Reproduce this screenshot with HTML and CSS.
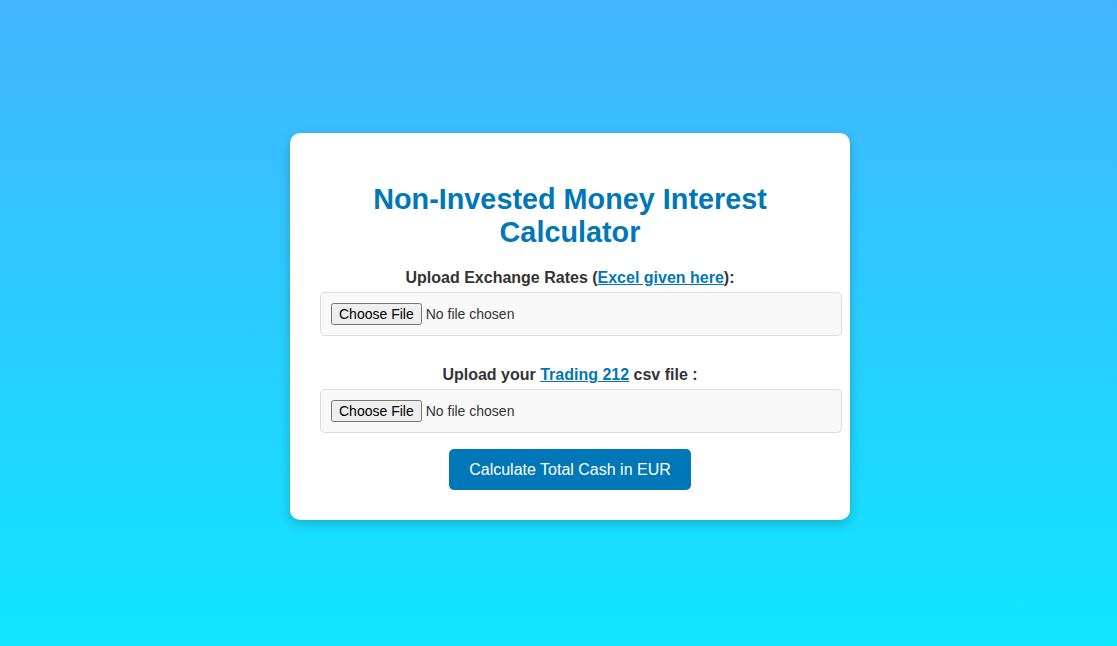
FILE: index.html
```html
<!DOCTYPE html>
<html lang="en">
<head>
<meta charset="utf-8">
<title>Non-Invested Money Interest Calculator</title>
<link rel="stylesheet" href="styles.css">
</head>
<body>
<div class="card">
  <h1 class="title">Non-Invested Money Interest Calculator</h1>
  <label class="label" for="rates">Upload Exchange Rates (<a href="#">Excel given here</a>):</label>
  <input class="file" type="file" id="rates">
  <label class="label second" for="csv">Upload your <a href="#">Trading 212</a> csv file :</label>
  <input class="file" type="file" id="csv">
  <div class="actions">
    <button class="btn" type="button">Calculate Total Cash in EUR</button>
  </div>
</div>
</body>
</html>
```

FILE: styles.css
```css
html, body {
  margin: 0;
  height: 100%;
}
body {
  font-family: "Liberation Sans", Arial, sans-serif;
  background: linear-gradient(to bottom, #43b4fe 0%, #0fe6ff 100%);
  display: flex;
  justify-content: center;
  align-items: center;
  padding-left: 23px;
  padding-top: 7px;
  box-sizing: border-box;
}
.card {
  width: 500px;
  padding: 30px;
  background: #ffffff;
  border-radius: 10px;
  box-shadow: 0 4px 12px rgba(0, 0, 0, 0.2);
}
.title {
  font-size: 28.8px;
  font-weight: bold;
  color: #0077b6;
  text-align: center;
  margin: 20px 0 20px;
}
.label {
  display: block;
  text-align: center;
  font-size: 16px;
  font-weight: bold;
  color: #333333;
  margin-bottom: 5px;
}
.label.second {
  margin-top: 30px;
}
.label a {
  color: #0077b6;
}
.file {
  display: block;
  width: 100%;
  padding: 10px;
  margin: 0;
  font-family: "Liberation Sans", Arial, sans-serif;
  font-size: 14px;
  color: #333333;
  background: #f9f9f9;
  border: 1px solid #dddddd;
  border-radius: 5px;
}
.actions {
  display: flex;
  justify-content: center;
  margin-top: 16px;
}
.btn {
  font-family: "Liberation Sans", Arial, sans-serif;
  font-size: 16px;
  color: #ffffff;
  background: #0077b6;
  border: none;
  border-radius: 5px;
  padding: 10px 20px;
  height: 41px;
  width: 242px;
  cursor: pointer;
}
```
